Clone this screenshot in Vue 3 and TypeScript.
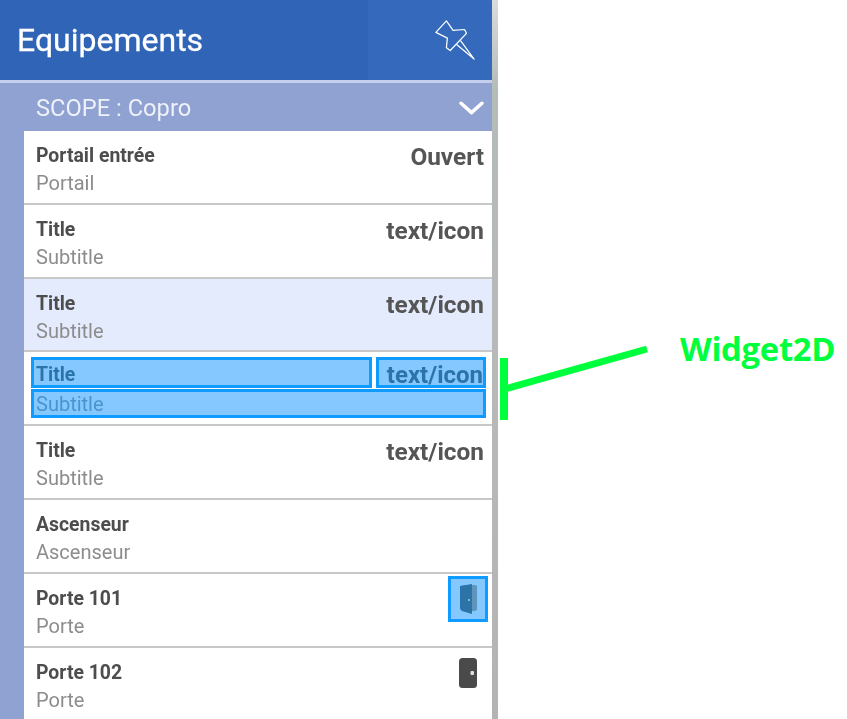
<script setup lang="ts">
interface Row {
  title: string
  subtitle: string
  right?: string
  icon?: "open" | "closed"
  tone?: "active" | "widget"
}

const rows: Row[] = [
  { title: "Portail entrée", subtitle: "Portail", right: "Ouvert" },
  { title: "Title", subtitle: "Subtitle", right: "text/icon" },
  { title: "Title", subtitle: "Subtitle", right: "text/icon", tone: "active" },
  { title: "Title", subtitle: "Subtitle", right: "text/icon", tone: "widget" },
  { title: "Title", subtitle: "Subtitle", right: "text/icon" },
  { title: "Ascenseur", subtitle: "Ascenseur" },
  { title: "Porte 101", subtitle: "Porte", icon: "open" },
  { title: "Porte 102", subtitle: "Porte", icon: "closed" }
]
</script>

<template>
  <div class="page">
    <div class="panel">
      <header class="topbar">
        <h1>Equipements</h1>
        <svg class="pin" viewBox="0 0 44 44" fill="none" stroke="#fff" stroke-width="1.3" stroke-linejoin="round" stroke-linecap="round">
          <path d="M2 14 L13 2 L20 12 L32 11 L34 15 L17 33 L13 30 L14 20 Z" />
          <path d="M24 27 L42 42 L28 23" />
        </svg>
      </header>
      <div class="scope">
        <span>SCOPE : Copro</span>
        <svg class="chevron" viewBox="0 0 24 14" fill="none" stroke="#fff" stroke-width="3.4" stroke-linecap="round" stroke-linejoin="round">
          <path d="M2 2 L12 11 L22 2" />
        </svg>
      </div>
      <div class="list">
        <div v-for="(row, i) in rows" :key="i" class="row" :class="row.tone">
          <div class="title">{{ row.title }}</div>
          <div v-if="row.right" class="right">{{ row.right }}</div>
          <div v-else-if="row.icon" class="icon-cell" :class="row.icon">
            <svg v-if="row.icon === 'open'" viewBox="0 0 18 30" width="18" height="30">
              <path d="M3 1 L16 1 Q18 1 18 3 L18 25 Q18 27 16 27 L13 27 L13 4 Z" fill="#5f95bd" />
              <path d="M1 2 L13 0 L13 30 L3 27 Q1 26 1 24 Z" fill="#2a74a8" />
              <circle cx="10" cy="16" r="1.1" fill="#9cc" />
            </svg>
            <svg v-else viewBox="0 0 18 30" width="18" height="30">
              <rect x="0" y="0" width="18" height="30" rx="3.5" fill="#4a4a4a" />
              <rect x="11.5" y="13" width="3.5" height="4" rx="1" fill="#ddd" />
            </svg>
          </div>
          <div class="subtitle">{{ row.subtitle }}</div>
        </div>
      </div>
    </div>
    <div class="edge"></div>

    <!-- annotation drawn over the screenshot -->
    <svg class="callout" width="847" height="719" viewBox="0 0 847 719">
      <rect x="500" y="358" width="8" height="62" fill="#00ff3c" />
      <path d="M505 389 L647 349" stroke="#00ff3c" stroke-width="7" />
    </svg>
    <div class="callout-label">Widget2D</div>
  </div>
</template>

<style>
html,
body {
  margin: 0;
  background: #fff;
}
</style>

<style scoped>
.page {
  position: relative;
  display: flex;
  width: 847px;
  height: 719px;
  overflow: hidden;
  font-family: Roboto, "Liberation Sans", sans-serif;
  background: #fff;
}
.panel {
  width: 492px;
  flex: none;
  display: flex;
  flex-direction: column;
  background: #8fa2d2;
  filter: blur(0.6px);
}
.edge {
  width: 6px;
  flex: none;
  background: linear-gradient(#d8dcdc 0, #b4bcb8 90px, #b8b8b8 400px, #b4b4b4 700px);
}
.topbar {
  height: 83px;
  flex: none;
  display: flex;
  align-items: center;
  justify-content: space-between;
  padding: 0 16px 0 17px;
  box-sizing: border-box;
  border-bottom: 3px solid #c3cfec;
  background: linear-gradient(90deg, #2f64b6 0, #2f64b6 368px, #3469bb 368px);
}
.topbar h1 {
  margin: 0;
  font-size: 32px;
  font-weight: 400;
  color: #fff;
  -webkit-text-stroke: 0.3px #fff;
}
.pin {
  width: 42px;
  height: 42px;
}
.scope {
  height: 48px;
  flex: none;
  display: flex;
  align-items: center;
  justify-content: space-between;
  padding: 2px 8px 0 36px;
  box-sizing: border-box;
  color: #eef1f9;
  font-size: 23.7px;
}
.chevron {
  width: 25px;
  height: 15px;
}
.list {
  margin-left: 24px;
  flex: 1;
  background: #fff;
}
.row {
  height: 73.8px;
  box-sizing: border-box;
  padding: 0 8px 0 12px;
  display: grid;
  grid-template-columns: 1fr auto;
  grid-template-rows: 39px 26px;
  align-items: end;
  border-bottom: 2px solid #c8c8c8;
}
.row.active {
  background: #e4ebfd;
}
.title {
  font-size: 19.4px;
  font-weight: 700;
  color: #4d4d4d;
  line-height: 26px;
  margin-bottom: 1px;
}
.right {
  font-size: 24.4px;
  font-weight: 700;
  color: #555;
  line-height: 28px;
  margin-bottom: -1px;
}
.subtitle {
  grid-column: 1 / -1;
  grid-row: 2;
  font-size: 20px;
  color: #8c8c8c;
  line-height: 26px;
}
.icon-cell {
  grid-column: 2;
  grid-row: 1;
  align-self: start;
  margin: 2px -4px 0 0;
  width: 40px;
  height: 46px;
  box-sizing: border-box;
  display: flex;
  align-items: center;
  justify-content: center;
}
.icon-cell.open {
  border: 3px solid #0f9bff;
  background: #84c8ff;
}
.row.widget {
  padding: 5px 6px 5.8px 7px;
  grid-template-columns: 1fr 110px;
  grid-template-rows: 31px 29px;
  column-gap: 4px;
  row-gap: 1px;
  align-items: stretch;
}
.row.widget .title,
.row.widget .right,
.row.widget .subtitle {
  background: #84c8ff;
  border: 3px solid #0f9bff;
  box-sizing: border-box;
  color: #2a74a8;
  margin: 0;
  white-space: nowrap;
}
.row.widget .title {
  padding: 5px 0 0 2px;
  line-height: 20px;
}
.row.widget .right {
  text-align: right;
  padding: 6px 0 0 0;
  font-size: 24px;
  line-height: 19px;
}
.row.widget .subtitle {
  color: #4a94cc;
  padding: 1px 0 0 2px;
  line-height: 22px;
}
.callout {
  position: absolute;
  left: 0;
  top: 0;
  pointer-events: none;
}
.callout-label {
  position: absolute;
  left: 680px;
  top: 326px;
  font-family: "Open Sans", "Liberation Sans", sans-serif;
  font-size: 32.8px;
  font-weight: 700;
  letter-spacing: -0.3px;
  color: #00ff3c;
}
</style>
